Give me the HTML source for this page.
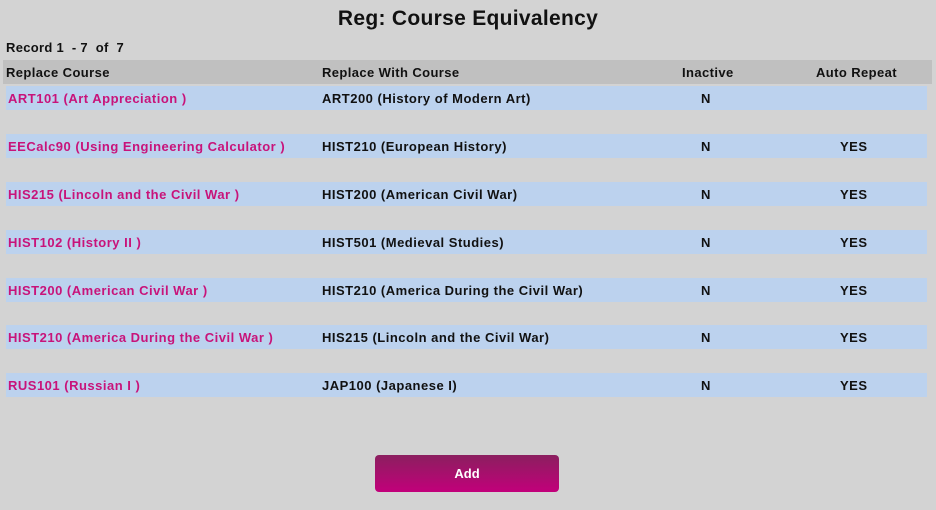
<!DOCTYPE html>
<html><head><style>
body{margin:0;width:936px;height:510px;background:#d3d3d3;font-family:"Liberation Sans",sans-serif;font-weight:bold;position:relative;overflow:hidden}
.t{position:absolute;top:7px;left:0;width:936px;text-align:center;font-size:21px;font-weight:bold;color:#111;letter-spacing:.3px}
.rec{position:absolute;left:6px;top:40px;font-size:13px;color:#111;letter-spacing:.3px}
.hd{position:absolute;left:3px;top:60px;width:929px;height:24px;background:#c0c0c0;font-size:13px;color:#111;letter-spacing:.4px}
.row{position:absolute;left:6px;width:921px;height:24px;background:#bcd2ee;font-size:13px;color:#111;letter-spacing:.5px}
span{position:absolute;top:5px;white-space:nowrap}
.c1{left:2px;color:#c8137a}
.hd .c1{color:#111;left:3px}
.c2{left:316px}.hd .c2{left:319px}
.c3{left:695px}.hd .c3{left:679px}
.c4{left:834px}.hd .c4{left:813px}
.btn{position:absolute;left:375px;top:455px;width:184px;height:37px;border-radius:4px;background:linear-gradient(#8b1f5f,#c2007a);color:#fff;font-size:13px;text-align:center;line-height:37px}
</style></head><body>
<div class="t">Reg: Course Equivalency</div>
<div class="rec">Record 1 &nbsp;- 7 &nbsp;of &nbsp;7</div>
<div class="hd"><span class="c1">Replace Course</span><span class="c2">Replace With Course</span><span class="c3">Inactive</span><span class="c4">Auto Repeat</span></div>
<div class="row" style="top:86px"><span class="c1">ART101 (Art Appreciation )</span><span class="c2">ART200 (History of Modern Art)</span><span class="c3">N</span></div>
<div class="row" style="top:134px"><span class="c1">EECalc90 (Using Engineering Calculator )</span><span class="c2">HIST210 (European History)</span><span class="c3">N</span><span class="c4">YES</span></div>
<div class="row" style="top:182px"><span class="c1">HIS215 (Lincoln and the Civil War )</span><span class="c2">HIST200 (American Civil War)</span><span class="c3">N</span><span class="c4">YES</span></div>
<div class="row" style="top:230px"><span class="c1">HIST102 (History II )</span><span class="c2">HIST501 (Medieval Studies)</span><span class="c3">N</span><span class="c4">YES</span></div>
<div class="row" style="top:278px"><span class="c1">HIST200 (American Civil War )</span><span class="c2">HIST210 (America During the Civil War)</span><span class="c3">N</span><span class="c4">YES</span></div>
<div class="row" style="top:325px"><span class="c1">HIST210 (America During the Civil War )</span><span class="c2">HIS215 (Lincoln and the Civil War)</span><span class="c3">N</span><span class="c4">YES</span></div>
<div class="row" style="top:373px"><span class="c1">RUS101 (Russian I )</span><span class="c2">JAP100 (Japanese I)</span><span class="c3">N</span><span class="c4">YES</span></div>
<div class="btn">Add</div>
</body></html>
